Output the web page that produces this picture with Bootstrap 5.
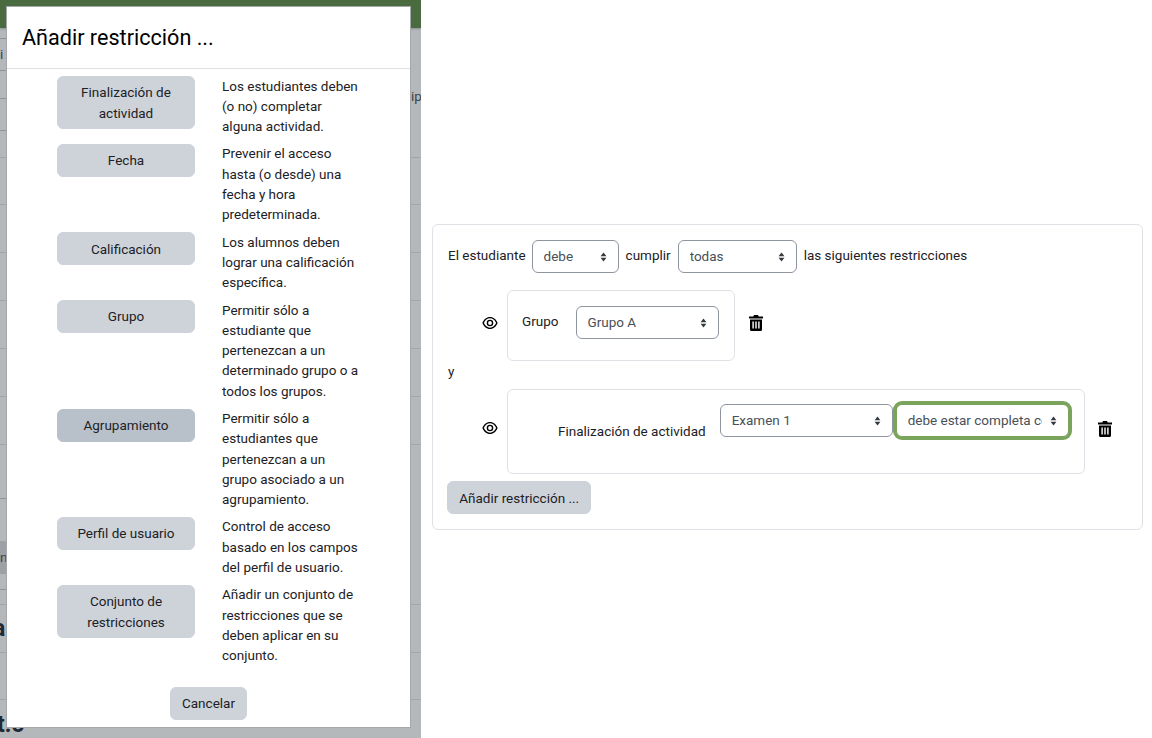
<!DOCTYPE html>
<html lang="es">
<head>
  <meta charset="UTF-8">
  <meta name="viewport" content="width=device-width, initial-scale=1">
  <title>Añadir restricción</title>
  <link href="https://cdn.jsdelivr.net/npm/bootstrap@5.3.0/dist/css/bootstrap.min.css" rel="stylesheet">
  <style>
    html, body { height: 100%; }
    body { font-family: Roboto, "Liberation Sans", sans-serif; font-size: 13.5px; line-height: 20.25px; color: #1d2125; background: #fff; overflow: hidden; }
    .shot { width: 1152px; height: 738px; }

    /* dimmed page behind the dialog */
    .backdrop-pane { width: 421px; height: 738px; background: #b5b8bb; position: relative; overflow: hidden; flex: none; }
    .top-strip { height: 28px; background: #4a6a3f; box-shadow: 0 1px 2px #8d9093; }
    .ghost-line { position: absolute; left: 0; right: 0; height: 1px; background: #a3a6a9; }
    .ghost-line.is-short { right: auto; width: 7px; background: #8f9296; }
    .ghost-text { position: absolute; color: #3d4247; line-height: 1; }
    .ghost-shade { position: absolute; left: 0; width: 7px; height: 33px; top: 541px; background: #9da0a5; }
    .ghost-head { font-weight: 700; font-size: 23px; color: #1f2a36; }

    .dialog-box { position: absolute; left: 6px; top: 6px; width: 405px; height: 722px; background: #fff; border: 1px solid #a5a8ab; }
    .dialog-title { height: 62px; margin: 0; padding: 17px 15px 0; font-size: 21.6px; line-height: 27px; font-weight: 400; color: #000; border-bottom: 1px solid #dee2e6; }
    .option-list { padding: 7px 50px 0; display: flex; flex-direction: column; gap: 7.2px; }
    .option-row { display: flex; align-items: flex-start; gap: 27px; }
    .option-btn, .grey-btn { padding: 5.4px 11.25px; font-size: 13.5px; line-height: 20.25px; color: #1d2125; background: #ced3da; border: 1px solid #ced3da; border-radius: 6px; }
    .option-btn { width: 138px; flex: none; }
    .option-btn.is-hover { background: #b8c1ca; border-color: #b8c1ca; }
    .option-text { width: 145px; color: #1d2125; margin: -.5px 0 .5px; }
    .dialog-foot { text-align: center; margin-top: 21px; }

    /* restriction editor */
    .editor-pane { flex: 1; padding: 224px 9px 0 11px; }
    .editor-box { height: 306px; border: 1px solid #dee2e6; border-radius: 6px; padding: 15px 14px 0; }
    .moodle-select {
      font-family: inherit; font-size: 13.5px; line-height: 20.25px; height: 33px; padding: 5px 26px 5px 11px; color: #495057;
      border: 1px solid #8f959e; border-radius: 6px;
      background-image: url("data:image/svg+xml,%3Csvg xmlns='http://www.w3.org/2000/svg' viewBox='0 0 8 12'%3E%3Cpath fill='%23343a40' d='M4 .5 7.500 5H.5zM4 11.500.5 7h7z'/%3E%3C/svg%3E");
      background-size: 7px 10px; background-position: right 11px center;
    }
    .moodle-select:focus { box-shadow: none; border-color: #8f959e; }
    .moodle-select.is-focused { border-color: #7aa35c; box-shadow: 0 0 0 3px #7aa35c; }
    .sel-debe { width: 87px; }
    .sel-todas { width: 119px; }
    .sel-grupo { width: 143px; }
    .sel-exam { width: 173px; }
    .sel-state { width: 173px; }
    .lab-text { margin-top: 5px; white-space: nowrap; }
    .lab-first { margin-left: 1px; margin-right: -1px; }
    .head-row { display: flex; align-items: flex-start; gap: 7px; margin-bottom: 17px; }
    .cond-row { display: flex; align-items: flex-start; }
    .eye-slot { width: 60px; flex: none; display: flex; justify-content: flex-end; padding-right: 9px; }
    .slot-a { margin-top: 25px; }
    .slot-b { margin-top: 31px; }
    .slot-c { margin-top: 32px; }
    .cond-box { border: 1px solid #dee2e6; border-radius: 6px; }
    .cond-group { width: 228px; height: 71px; padding: 15px 14px 0; display: flex; gap: 17px; }
    .cond-finish { width: 578px; height: 85px; padding: 14px 13px 0 50px; display: flex; align-items: flex-start; gap: 3px; }
    .cond-finish .moodle-select { padding-top: 4px; padding-bottom: 6px; }
    .finish-label { margin-top: 17px; margin-right: 11px; white-space: nowrap; }
    .trash-slot { padding-left: 13px; }
    .trash-first { padding-left: 14px; }
    .and-word { margin: 0 0 8px 1px; }
    .add-btn { margin-top: 7px; }
    .ico { display: block; }
  </style>
</head>
<body>
  <div class="shot d-flex">
    <div class="backdrop-pane">
      <div class="top-strip"></div>
      <div class="ghost-line is-short" style="top:38px"></div>
      <div class="ghost-line is-short" style="top:70px"></div>
      <div class="ghost-line is-short" style="top:98px"></div>
      <div class="ghost-line is-short" style="top:130px"></div>
      <div class="ghost-line" style="top:157px"></div>
      <div class="ghost-line" style="top:204px"></div>
      <div class="ghost-line" style="top:252px"></div>
      <div class="ghost-line" style="top:300px"></div>
      <div class="ghost-line" style="top:348px"></div>
      <div class="ghost-line" style="top:396px"></div>
      <div class="ghost-line" style="top:444px"></div>
      <div class="ghost-line is-short" style="top:498px"></div>
      <div class="ghost-line is-short" style="top:589px"></div>
      <div class="ghost-line" style="top:604px"></div>
      <div class="ghost-line" style="top:652px"></div>
      <div class="ghost-line" style="top:699px"></div>
      <div class="ghost-shade"></div>
      <span class="ghost-text" style="left:0;top:48px">i</span>
      <span class="ghost-text" style="left:411px;top:90px">ip</span>
      <span class="ghost-text" style="left:0;top:551px">n</span>
      <span class="ghost-text ghost-head" style="left:-7px;top:617px">a</span>
      <span class="ghost-text ghost-head" style="left:-3px;top:713px">t.o</span>
      <div class="dialog-box">
        <h5 class="dialog-title">Añadir restricción ...</h5>
        <div class="option-list">
          <div class="option-row">
            <button class="btn option-btn" type="button">Finalización de actividad</button>
            <div class="option-text">Los estudiantes deben (o no) completar alguna actividad.</div>
          </div>
          <div class="option-row">
            <button class="btn option-btn" type="button">Fecha</button>
            <div class="option-text">Prevenir el acceso hasta (o desde) una fecha y hora predeterminada.</div>
          </div>
          <div class="option-row">
            <button class="btn option-btn" type="button">Calificación</button>
            <div class="option-text">Los alumnos deben lograr una calificación específica.</div>
          </div>
          <div class="option-row">
            <button class="btn option-btn" type="button">Grupo</button>
            <div class="option-text">Permitir sólo a estudiante que pertenezcan a un determinado grupo o a todos los grupos.</div>
          </div>
          <div class="option-row">
            <button class="btn option-btn is-hover" type="button">Agrupamiento</button>
            <div class="option-text">Permitir sólo a estudiantes que pertenezcan a un grupo asociado a un agrupamiento.</div>
          </div>
          <div class="option-row">
            <button class="btn option-btn" type="button">Perfil de usuario</button>
            <div class="option-text">Control de acceso basado en los campos del perfil de usuario.</div>
          </div>
          <div class="option-row">
            <button class="btn option-btn" type="button">Conjunto de restricciones</button>
            <div class="option-text">Añadir un conjunto de restricciones que se deben aplicar en su conjunto.</div>
          </div>
        </div>
        <div class="dialog-foot"><button class="btn grey-btn" type="button">Cancelar</button></div>
      </div>
    </div>

    <div class="editor-pane">
      <div class="editor-box">
        <div class="head-row">
          <span class="lab-text lab-first">El estudiante</span>
          <select class="form-select moodle-select sel-debe"><option>debe</option></select>
          <span class="lab-text">cumplir</span>
          <select class="form-select moodle-select sel-todas"><option>todas</option></select>
          <span class="lab-text">las siguientes restricciones</span>
        </div>
        <div class="cond-row">
          <div class="eye-slot slot-a">
            <svg class="ico" width="16" height="16" viewBox="0 0 16 16" fill="#000" fill-rule="evenodd"><path d="M8 2C4.500 2 1.600 4.600.4 8c1.200 3.400 4.100 6 7.600 6s6.400-2.600 7.600-6C14.400 4.600 11.500 2 8 2zm0 10.700C5.300 12.700 3 10.700 1.900 8 3 5.300 5.300 3.300 8 3.300s5 2 6.100 4.700C13 10.700 10.700 12.700 8 12.700z"/><path d="M8 4.700a3.300 3.300 0 1 0 0 6.600 3.300 3.300 0 0 0 0-6.600zm0 5.200a1.900 1.900 0 1 1 0-3.800 1.900 1.900 0 0 1 0 3.800z"/></svg>
          </div>
          <div class="cond-box cond-group">
            <span class="lab-text">Grupo</span>
            <select class="form-select moodle-select sel-grupo"><option>Grupo A</option></select>
          </div>
          <div class="trash-slot trash-first slot-a">
            <svg class="ico" width="14" height="16" viewBox="0 0 14 16" fill="#000"><path d="M5 0h4l.7 1.500H14v2H0v-2h4.300L5 0z"/><path fill-rule="evenodd" d="M1 4.500h12V14.500A1.500 1.500 0 0 1 11.500 16h-9A1.500 1.500 0 0 1 1 14.500V4.500zM3.400 6.500v7h1.400v-7H3.400zm2.900 0v7h1.400v-7H6.300zm2.900 0v7h1.400v-7H9.200z"/></svg>
          </div>
        </div>
        <div class="and-word">y</div>
        <div class="cond-row">
          <div class="eye-slot slot-b">
            <svg class="ico" width="16" height="16" viewBox="0 0 16 16" fill="#000" fill-rule="evenodd"><path d="M8 2C4.500 2 1.600 4.600.4 8c1.200 3.400 4.100 6 7.600 6s6.400-2.600 7.600-6C14.400 4.600 11.500 2 8 2zm0 10.700C5.300 12.700 3 10.700 1.900 8 3 5.300 5.300 3.300 8 3.300s5 2 6.100 4.700C13 10.700 10.700 12.700 8 12.700z"/><path d="M8 4.700a3.300 3.300 0 1 0 0 6.600 3.300 3.300 0 0 0 0-6.600zm0 5.200a1.900 1.900 0 1 1 0-3.800 1.900 1.900 0 0 1 0 3.800z"/></svg>
          </div>
          <div class="cond-box cond-finish">
            <span class="finish-label">Finalización de actividad</span>
            <select class="form-select moodle-select sel-exam"><option>Examen 1</option></select>
            <select class="form-select moodle-select is-focused sel-state"><option>debe estar completa con calificación</option></select>
          </div>
          <div class="trash-slot slot-c">
            <svg class="ico" width="14" height="16" viewBox="0 0 14 16" fill="#000"><path d="M5 0h4l.7 1.500H14v2H0v-2h4.300L5 0z"/><path fill-rule="evenodd" d="M1 4.500h12V14.500A1.500 1.500 0 0 1 11.500 16h-9A1.500 1.500 0 0 1 1 14.500V4.500zM3.400 6.500v7h1.400v-7H3.400zm2.900 0v7h1.400v-7H6.300zm2.900 0v7h1.400v-7H9.200z"/></svg>
          </div>
        </div>
        <button class="btn grey-btn add-btn" type="button">Añadir restricción ...</button>
      </div>
    </div>
  </div>
</body>
</html>
